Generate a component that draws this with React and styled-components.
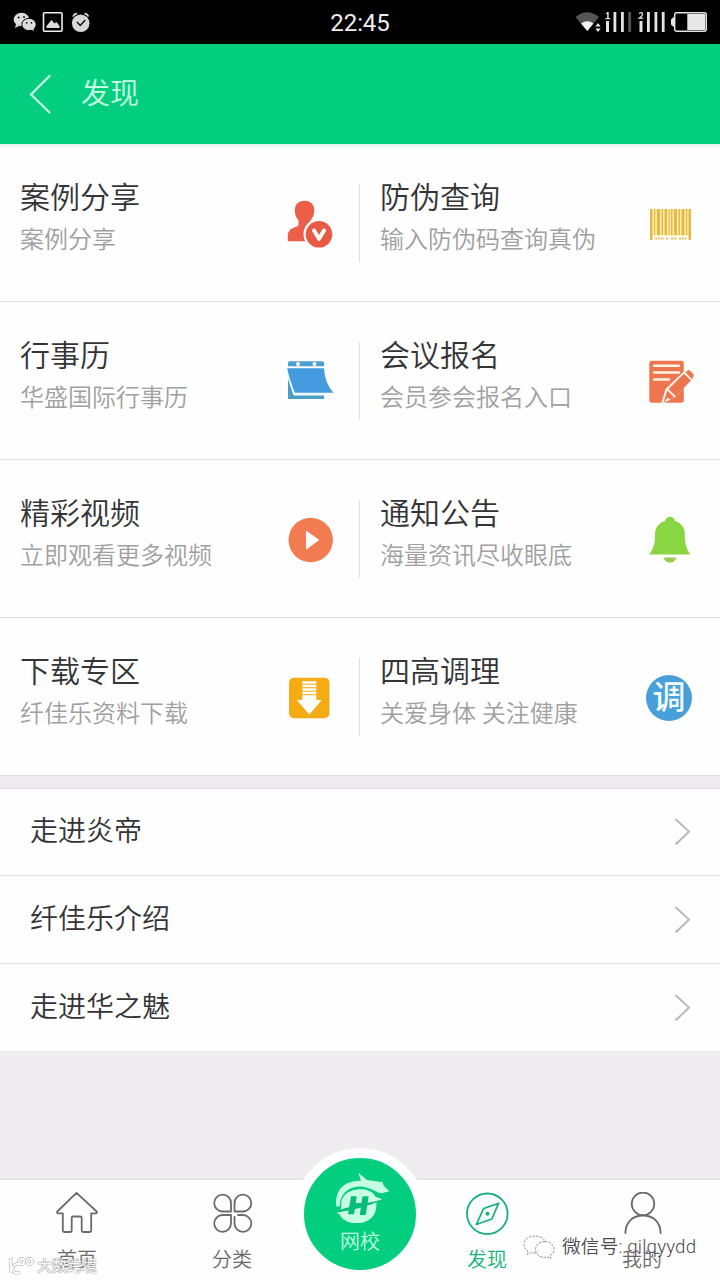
import styled, { createGlobalStyle } from 'styled-components';

const GlobalStyle = createGlobalStyle`
  * {
    box-sizing: border-box;
  }
  body {
    margin: 0;
    font-family: Roboto, 'Noto Sans CJK SC', sans-serif;
    font-weight: 350;
    background: #eeecef;
  }
  svg {
    display: block;
    flex-shrink: 0;
  }
`;

const Screen = styled.div`
  width: 720px;
  height: 1280px;
  display: flex;
  flex-direction: column;
  position: relative;
  overflow: hidden;
  background: #eeecef;
`;

const StatusBar = styled.div`
  height: 44px;
  flex-shrink: 0;
  display: grid;
  grid-template-columns: 1fr auto 1fr;
  align-items: center;
  background: #000;
`;

const Clock = styled.span`
  color: #ededed;
  font-size: 24px;
  font-weight: 400;
  line-height: 42px;
  padding-top: 2px;
  letter-spacing: -0.1px;
`;

const StatusRight = styled.div`
  display: flex;
  justify-content: flex-end;
`;

const Header = styled.header`
  height: 100px;
  flex-shrink: 0;
  display: flex;
  align-items: center;
  gap: 29px;
  padding-left: 28px;
  background: #03ce7f;
  color: #c8ffe4;
  h1 {
    margin: 0;
    font-size: 29px;
    line-height: 40px;
    font-weight: 350;
  }
`;

const Grid = styled.div`
  display: grid;
  grid-template-columns: 360px 360px;
  flex-shrink: 0;
  background: linear-gradient(#e2f3ea, #fefefe 5px);
`;

const Cell = styled.div`
  height: 158px;
  display: flex;
  align-items: center;
  border-bottom: 1px solid #e0dde3;
  padding-left: 20px;
`;

const CellText = styled.div`
  flex: 1;
  height: 100%;
  padding-top: 34px;
  white-space: nowrap;
`;

const CellTitle = styled.div`
  font-size: 30px;
  line-height: 40px;
  color: #343436;
`;

const CellSub = styled.div`
  font-size: 24px;
  line-height: 36px;
  padding-top: 4px;
  color: #a09fa2;
`;

const CellIcon = styled.div`
  padding-top: 2px;
`;

const Divider = styled.div`
  width: 1px;
  height: 78px;
  margin: 0 0 0 25px;
  background: ${(props) => (props.$hidden ? 'transparent' : '#e2e0e5')};
`;

const List = styled.div`
  margin-top: 12px;
  flex-shrink: 0;
  border-top: 1px solid #e0dde3;
`;

const ListRow = styled.div`
  height: 88px;
  display: flex;
  align-items: center;
  justify-content: space-between;
  padding: 0 29px 0 30px;
  background: #fefefe;
  border-bottom: 1px solid #e0dde3;
  color: #343436;
  &:first-child {
    height: 87px;
  }
  &:last-child {
    height: 87px;
    border-bottom: 0;
  }
  span {
    font-size: 28px;
    line-height: 40px;
  }
`;

const TabBar = styled.nav`
  height: 100px;
  margin-top: auto;
  flex-shrink: 0;
  display: flex;
  align-items: flex-start;
  background: #fefefe;
  box-shadow: 0 -1px 2px rgba(0, 0, 0, 0.08);
`;

const Tab = styled.div`
  width: 155px;
  height: 100px;
  padding: 12px 1px 0 0;
  display: flex;
  flex-direction: column;
  align-items: center;
  color: ${(props) => (props.$active ? '#17b27a' : '#6a696c')};
  span {
    font-size: 20px;
    line-height: 30px;
    padding-top: 9px;
  }
`;

const CenterTab = styled.div`
  width: 132px;
  height: 132px;
  margin: -32px -16px 0;
  border-radius: 50%;
  border: 10px solid #fefefe;
  background: #03ce7f;
  display: flex;
  flex-direction: column;
  align-items: center;
  padding-top: 14px;
  color: #c4ffe2;
  span {
    font-size: 20px;
    line-height: 28px;
    margin-top: 4px;
  }
`;

const Watermark = styled.div`
  position: absolute;
  display: flex;
  align-items: center;
  white-space: nowrap;
`;

const SourceMark = styled(Watermark)`
  left: 7px;
  top: 1254px;
  gap: 2px;
  color: #fff;
  font-size: 15px;
  line-height: 24px;
  font-weight: 400;
  text-shadow: 0 0 1px #777, 0 0 1px #999, 0 0 2px #bbb;
`;

const WechatMark = styled(Watermark)`
  left: 523px;
  top: 1234px;
  gap: 7px;
  color: #4b4b4d;
  font-size: 18.7px;
  line-height: 26px;
  font-weight: 350;
  letter-spacing: 0.15px;
  text-shadow: -1px -1px 0 #fff;
`;

const TuneBadge = styled.div`
  width: 46px;
  height: 46px;
  margin: 1px 2px 1px 0;
  display: flex;
  align-items: center;
  justify-content: center;
  border-radius: 50%;
  background: #489fd9;
  color: #f2fcff;
  font-size: 33px;
  line-height: 46px;
  font-weight: 500;
`;

function Notifications() {
  return (
    <svg width="100" height="44" viewBox="0 0 100 44">
      <ellipse cx="21.5" cy="19.5" rx="7.8" ry="6.8" fill="#ddd" />
      <path d="M16 24l-1 4 4-2z" fill="#ddd" />
      <ellipse cx="29" cy="24.5" rx="7.2" ry="6.2" fill="#ddd" stroke="#000" strokeWidth="1" />
      <path d="M31 29l3 2-.5-3z" fill="#ddd" />
      <g fill="#111">
        <circle cx="18.7" cy="17.5" r="1" />
        <circle cx="24" cy="17" r="1" />
        <circle cx="26.7" cy="22.8" r=".9" />
        <circle cx="31.5" cy="22.8" r=".9" />
      </g>
      <rect x="43.5" y="12.8" width="18.5" height="18.5" rx="1" fill="none" stroke="#eee" strokeWidth="1.6" />
      <path d="M46.5 28v-2l5-6 3 3.5 2-1.5 3 4v2z" fill="#ddd" />
      <circle cx="80.7" cy="23.3" r="8.8" fill="#d8d8d8" />
      <path d="M73 16.5q1-2.5 4-3.2M84.5 13.3q3 .7 4 3.2" stroke="#d8d8d8" strokeWidth="1.8" fill="none" />
      <path d="M77 22l3.3 3.5 5-5.5" stroke="#111" strokeWidth="1.5" fill="none" />
    </svg>
  );
}

function Signals() {
  return (
    <svg width="150" height="44" viewBox="570 0 150 44">
      <path d="M575.5 17q11.5-9.5 23.5 0l-11.7 14z" fill="#555" />
      <path d="M581 23.5q6.5-4.5 12.5 0L587.3 31z" fill="#f2f2f2" />
      <path d="M595.3 26.5l2.7-3.5 2.7 3.5zM595.3 28.5l2.7 3.5 2.7-3.5z" fill="#e8e8e8" />
      <g fill="#e4e4e4">
        <path d="M605.5 13.5l2-1.5h1.200v6h1.500v1.200h-4.700V18h1.700v-4zM606 21h3v11h-3zM613.5 12h2.800v20h-2.800zM621 12h2.800v20H621z" />
        <path d="M639.5 21h3v11h-3zM647 12h2.800v20H647zM654.5 12h2.800v20h-2.800zM661.8 12h2.800v20h-2.800z" />
      </g>
      <path d="M639 13.500q3.500-2 3.500.7 0 1.500-3.300 4h4" stroke="#e4e4e4" strokeWidth="1.3" fill="none" />
      <path d="M628.3 12h2.800v20h-2.800z" fill="#555" />
      <rect x="674.7" y="12.7" width="31.6" height="18.6" rx="2" fill="none" stroke="#e4e4e4" strokeWidth="1.4" />
      <path d="M671 19.5l3.300-3v11l-3.300-3zM687.3 14h18v16h-18z" fill="#e8e8e8" />
    </svg>
  );
}

const CaseIcon = () => (
  <svg width="48" height="48" viewBox="0 0 48 48">
    <path
      d="M18.500.8c6.300 0 10 4 9.800 10 0 4-1.500 7-3.600 9.500v4c2 2 8 3 11 6v11H1.800V36c0-5 3-7.500 7-8.800 2.500-.8 3.700-1.500 3.700-3v-4C10.300 18 9 15 8.800 11 8.600 5 12 .8 18.500.8z"
      fill="#ec5e49"
    />
    <circle cx="33" cy="34.3" r="15.5" fill="#fefefe" />
    <circle cx="33" cy="34.3" r="13.3" fill="#e95a45" />
    <path d="M28 30.5l5 8.300 5-8.300" fill="none" stroke="#fff" strokeWidth="4" strokeLinecap="round" strokeLinejoin="round" />
  </svg>
);

const BARS = [
  [4, 2.5],
  [8, 1.2],
  [11, 3],
  [15.5, 1.5],
  [18.5, 2.5],
  [22.5, 1.2],
  [25, 1.5],
  [28, 3],
  [32.5, 1.5],
  [35.5, 3],
  [40, 1.2],
  [42.5, 2.5],
];

const BarcodeIcon = () => (
  <svg width="48" height="48" viewBox="0 0 48 48">
    <path d="M4 9h41v27H4z" fill="#fdeeb4" />
    {BARS.map(([x, w], i) => (
      <rect key={x} x={x} y="9" width={w} height={i === 0 || i === BARS.length - 1 ? 31 : 26} fill="#e6b944" />
    ))}
    <path d="M9 38.5h9M20 38.5h2M25 38.5h6M33 38.5h8" stroke="#e6bf60" strokeWidth="2" strokeDasharray="2 .7" />
  </svg>
);

const CalendarIcon = () => (
  <svg width="48" height="48" viewBox="0 0 48 48">
    <path d="M4 3.3h32q2 0 2 2v3H2v-3q0-2 2-2z" fill="#4b9fd0" />
    <path d="M2 18l6 19.500h30V41H2z" fill="#4b9fc4" />
    <circle cx="12" cy="6" r="2" fill="#fff" />
    <circle cx="28.5" cy="6" r="2" fill="#fff" />
    <path d="M1.2 10.3H38Q39 26 47.5 34.8H9Q4 26 1.2 10.3z" fill="#449be0" />
    <path d="M1 15L8 36.2H38" fill="none" stroke="#eafaff" strokeWidth="1.8" />
  </svg>
);

const SignupIcon = () => (
  <svg width="48" height="48" viewBox="0 0 48 48">
    <rect x="3.3" y="2.7" width="34.5" height="42" rx="2.5" fill="#ed7650" />
    <path d="M8 7.8h25M8 14.5h25M8 21.5h15" stroke="#fff3e6" strokeWidth="2.5" strokeLinecap="round" />
    <path d="M15 46l4.500-15L41 10.500l9 7L28 40z" fill="#fff6ee" />
    <path d="M17.300 45l4-12.500 7 7zM22.500 31L38 15.800l7 6.700L29.800 38.300zM39.300 14.500l2.700-2.300q.8-.6 1.700.2l3.600 3.700q.8.900 0 1.700L46.300 21.300z" fill="#ed7650" />
    <path d="M17.500 45l4.300-5.500 2.200 2.200z" fill="#fff6ee" />
  </svg>
);

const VideoIcon = () => (
  <svg width="48" height="48" viewBox="0 0 48 48">
    <circle cx="24.7" cy="24" r="22.2" fill="#f37b52" />
    <path d="M20 14.500v19.300L33.300 24z" fill="#fff" />
  </svg>
);

const BellIcon = () => (
  <svg width="48" height="48" viewBox="0 0 48 48">
    <path
      d="M24 .8c2.700 0 4.500 1.700 5 4.200 6 1.700 9.800 6.500 9.800 13 0 9 .7 13 5.500 20.500H3.300C8.300 31 9 27 9 18c0-6.500 4-11.300 10-13C19.500 2.500 21.300.8 24 .8z"
      fill="#89d643"
    />
    <path d="M17.500 41.500h13q-2 5.200-6.500 5.200t-6.500-5.200z" fill="#9acb4d" />
  </svg>
);

const DownloadIcon = () => (
  <svg width="48" height="48" viewBox="0 0 48 48">
    <rect x="3" y="3.7" width="40.5" height="40.6" rx="5" fill="#f5ab13" />
    <path d="M16.300 8.500h14M16.300 12h14M16.300 15.500h14M16.300 19h14" stroke="#fff" strokeWidth="2.3" />
    <path d="M16.300 21.300h14V26h5.500L23.300 40.500 10.800 26h5.500z" fill="#fff" />
  </svg>
);

const Chevron = () => (
  <svg width="18" height="30" viewBox="0 0 18 30" fill="none" stroke="#b5b3b8" strokeWidth="1.8">
    <path d="M2.500 2L16 14.700 2.500 27.500" />
  </svg>
);

function TabIcon({ children }) {
  return (
    <svg width="44" height="44" viewBox="0 0 44 44" fill="none" stroke="currentColor" strokeWidth="1.8" strokeLinejoin="round" strokeLinecap="round">
      {children}
    </svg>
  );
}

const HomeIcon = () => (
  <TabIcon>
    <path d="M21.500.8L2.300 19.500q-.8 1.800 1 1.800H7.800V38.500q0 1.500 1.500 1.500h6.200q1.200 0 1.200-1.500V26q0-1.500 1.500-1.500h7q1.500 0 1.500 1.500v12.500q0 1.500 1.500 1.500h6.500q1.500 0 1.500-1.500V21.300h4.500q1.800 0 1-1.800z" />
  </TabIcon>
);

const CategoryIcon = () => (
  <TabIcon>
    <path d="M21 19.500h-8.500a8.400 8.400 0 1 1 8.500-8.300zM24.500 19.500H33a8.400 8.400 0 1 0-8.500-8.300zM21 23h-8.500a8.400 8.400 0 1 0 8.500 8.500zM24.500 25v6.500A8.400 8.400 0 1 0 33 23h-5" />
  </TabIcon>
);

const CompassIcon = () => (
  <TabIcon>
    <circle cx="22.3" cy="21.8" r="20.3" />
    <path d="M33.600 11.300l-15 5.200L11.300 32.500l15.500-5.500z" />
    <circle cx="22.500" cy="21.800" r="1.1" fill="currentColor" />
  </TabIcon>
);

const MeIcon = () => (
  <TabIcon>
    <circle cx="23" cy="11.8" r="11.3" />
    <path d="M5.400 41c0-10.500 7-17.500 17.600-17.500S40.600 30.500 40.600 41" />
  </TabIcon>
);

const SchoolLogo = () => (
  <svg width="60" height="52" viewBox="120 95 180 156">
    <path d="M140 199C132 155 158 120 213 121L205 97L231 119L278 126L281 136L298 153L276 159C260 158 248 144 220 139C179 133 149 159 149 198z" fill="#c7ffe4" />
    <path d="M154 195C151 164 181 145 218 147C236 148 250 157 257 169L277 177Q265 181 259 188C262 226 236 249 203 248C174 249 155 238 148 220L139 219L153 209z" fill="#c7ffe4" />
    <path d="M183 168h17l-3 20h17l4-20h18l-9 56h-18l4-25h-17l-4 23h-18z" fill="#07bd79" />
    <path d="M137 217C180 211 230 202 279 177C247 187 190 195 149 209z" fill="#07bd79" />
  </svg>
);

const features = [
  { title: '案例分享', sub: '案例分享', icon: <CaseIcon /> },
  { title: '防伪查询', sub: '输入防伪码查询真伪', icon: <BarcodeIcon /> },
  { title: '行事历', sub: '华盛国际行事历', icon: <CalendarIcon /> },
  { title: '会议报名', sub: '会员参会报名入口', icon: <SignupIcon /> },
  { title: '精彩视频', sub: '立即观看更多视频', icon: <VideoIcon /> },
  { title: '通知公告', sub: '海量资讯尽收眼底', icon: <BellIcon /> },
  { title: '下载专区', sub: '纤佳乐资料下载', icon: <DownloadIcon /> },
  { title: '四高调理', sub: '关爱身体 关注健康', icon: <TuneBadge>调</TuneBadge> },
];

const links = ['走进炎帝', '纤佳乐介绍', '走进华之魅'];

function App() {
  return (
    <>
      <GlobalStyle />
      <Screen>
        <StatusBar>
          <Notifications />
          <Clock>22:45</Clock>
          <StatusRight>
            <Signals />
          </StatusRight>
        </StatusBar>
        <Header>
          <svg width="24" height="42" viewBox="0 0 24 42" fill="none" stroke="currentColor" strokeWidth="2.2" strokeLinecap="round">
            <path d="M21.500 3L3 21.500 21.500 39.500" />
          </svg>
          <h1>发现</h1>
        </Header>
        <Grid>
          {features.map((item, i) => (
            <Cell key={item.title}>
              <CellText>
                <CellTitle>{item.title}</CellTitle>
                <CellSub>{item.sub}</CellSub>
              </CellText>
              <CellIcon>{item.icon}</CellIcon>
              <Divider $hidden={i % 2 === 1} />
            </Cell>
          ))}
        </Grid>
        <List>
          {links.map((text) => (
            <ListRow key={text}>
              <span>{text}</span>
              <Chevron />
            </ListRow>
          ))}
        </List>
        <TabBar>
          <Tab>
            <HomeIcon />
            <span>首页</span>
          </Tab>
          <Tab>
            <CategoryIcon />
            <span>分类</span>
          </Tab>
          <CenterTab>
            <SchoolLogo />
            <span>网校</span>
          </CenterTab>
          <Tab $active>
            <CompassIcon />
            <span>发现</span>
          </Tab>
          <Tab>
            <MeIcon />
            <span>我的</span>
          </Tab>
        </TabBar>
        <SourceMark>
          <svg width="28" height="18" viewBox="0 0 28 18" fill="none">
            <g stroke="#b5b5b5" strokeWidth="3.2">
              <path d="M2 4l2-1v13M13 8a4.500 4.500 0 1 0 0 7" />
              <circle cx="14.5" cy="4.5" r="2.8" />
              <circle cx="22.5" cy="4.5" r="2.8" />
            </g>
            <g stroke="#fff" strokeWidth="1.8">
              <path d="M2 4l2-1v13M13 8a4.500 4.500 0 1 0 0 7" />
              <circle cx="14.5" cy="4.5" r="2.8" />
              <circle cx="22.5" cy="4.5" r="2.8" />
            </g>
          </svg>
          大数跨境
        </SourceMark>
        <WechatMark>
          <svg width="32" height="26" viewBox="0 0 32 26" fill="#fff" stroke="#888" strokeWidth=".9" strokeDasharray="2.5 1.2">
            <path d="M12 2C5 2 1 6 1 10.500c0 3 1.500 5 4 6.500l-.8 3.500 4-2c9 2 15-2 15-8C23 5.500 18 2 12 2z" />
            <path d="M22 7.500c-6 0-9.500 3.800-9.500 8.200 0 5.300 5.500 9 12.500 7.300l3 1.500-.7-3c2.300-1.500 3.700-3.500 3.700-6 0-4.500-4-8-9-8z" />
          </svg>
          微信号: qilqyydd
        </WechatMark>
      </Screen>
    </>
  );
}

export default App;
